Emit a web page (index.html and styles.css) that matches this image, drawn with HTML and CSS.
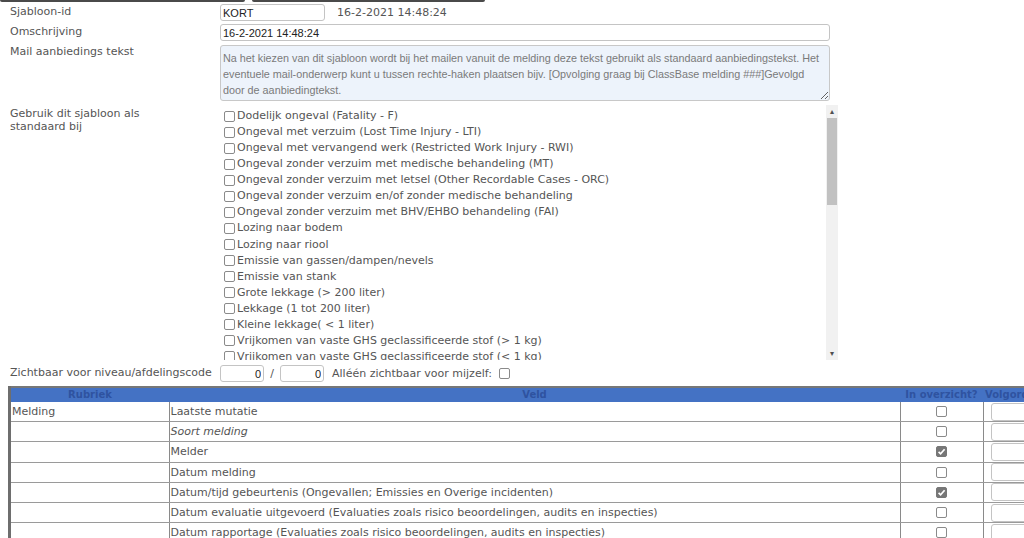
FILE: index.html
```html
<!DOCTYPE html>
<html lang="nl">
<head>
    <meta charset="UTF-8">
    <title>Sjabloon</title>
    <link rel="stylesheet" href="styles.css">
</head>
<body>

<div class="topbar"><span class="tab tab1"></span><span class="tab tab2"></span></div>

<div class="form">
    <div class="row">
        <div class="lbl">Sjabloon-id</div>
        <div class="field">
            <input class="inp short" value="KORT">
            <span class="stamp">16-2-2021 14:48:24</span>
        </div>
    </div>
    <div class="row">
        <div class="lbl">Omschrijving</div>
        <div class="field"><input class="inp wide" value="16-2-2021 14:48:24"></div>
    </div>
    <div class="row">
        <div class="lbl">Mail aanbiedings tekst</div>
        <div class="areafield"><textarea class="mailtext" wrap="off">Na het kiezen van dit sjabloon wordt bij het mailen vanuit de melding deze tekst gebruikt als standaard aanbiedingstekst. Het
eventuele mail-onderwerp kunt u tussen rechte-haken plaatsen bijv. [Opvolging graag bij ClassBase melding ###]Gevolgd
door de aanbiedingtekst.</textarea></div>
    </div>
    <div class="row listrow">
        <div class="lbl">Gebruik dit sjabloon als<br>standaard bij</div>
        <div class="listbox">
            <div class="opts">
                <label class="opt"><span class="cb"></span>Dodelijk ongeval (Fatality - F)</label>
                <label class="opt"><span class="cb"></span>Ongeval met verzuim (Lost Time Injury - LTI)</label>
                <label class="opt"><span class="cb"></span>Ongeval met vervangend werk (Restricted Work Injury - RWI)</label>
                <label class="opt"><span class="cb"></span>Ongeval zonder verzuim met medische behandeling (MT)</label>
                <label class="opt"><span class="cb"></span>Ongeval zonder verzuim met letsel (Other Recordable Cases - ORC)</label>
                <label class="opt"><span class="cb"></span>Ongeval zonder verzuim en/of zonder medische behandeling</label>
                <label class="opt"><span class="cb"></span>Ongeval zonder verzuim met BHV/EHBO behandeling (FAI)</label>
                <label class="opt"><span class="cb"></span>Lozing naar bodem</label>
                <label class="opt"><span class="cb"></span>Lozing naar riool</label>
                <label class="opt"><span class="cb"></span>Emissie van gassen/dampen/nevels</label>
                <label class="opt"><span class="cb"></span>Emissie van stank</label>
                <label class="opt"><span class="cb"></span>Grote lekkage (&gt; 200 liter)</label>
                <label class="opt"><span class="cb"></span>Lekkage (1 tot 200 liter)</label>
                <label class="opt"><span class="cb"></span>Kleine lekkage( &lt; 1 liter)</label>
                <label class="opt"><span class="cb"></span>Vrijkomen van vaste GHS geclassificeerde stof (&gt; 1 kg)</label>
                <label class="opt"><span class="cb"></span>Vrijkomen van vaste GHS geclassificeerde stof (&lt; 1 kg)</label>
                <label class="opt"><span class="cb"></span>Vrijkomen van vloeibare GHS geclassificeerde stof</label>
                <label class="opt"><span class="cb"></span>Brand</label>
            </div>
            <div class="vscroll">
                <span class="arrow">&#9652;</span>
                <span class="thumb"></span>
                <span class="track"></span>
                <span class="arrow">&#9662;</span>
            </div>
        </div>
    </div>
    <div class="row visrow">
        <div class="lbl">Zichtbaar voor niveau/afdelingscode</div>
        <div class="field">
            <input class="inp num" value="0">
            <span class="slash">/</span>
            <input class="inp num" value="0">
            <span class="own">Alléén zichtbaar voor mijzelf:</span>
            <span class="cb"></span>
        </div>
    </div>
</div>

<table class="fields">
    <tr class="head">
        <th class="c1">Rubriek</th>
        <th class="c2">Veld</th>
        <th class="c3">In overzicht?</th>
        <th class="c4">Volgorde</th>
    </tr>
    <tr><td>Melding</td><td>Laatste mutatie</td><td class="mid"><span class="cb"></span></td><td><input class="inp ord"></td></tr>
    <tr><td></td><td class="ital">Soort melding</td><td class="mid"><span class="cb"></span></td><td><input class="inp ord"></td></tr>
    <tr><td></td><td>Melder</td><td class="mid"><span class="cb on"><svg viewBox="0 0 11 11" width="11" height="11"><path d="M2.6 5.8 L4.6 7.8 L8.6 3.2" fill="none" stroke="#fff" stroke-width="1.7"/></svg></span></td><td><input class="inp ord"></td></tr>
    <tr><td></td><td>Datum melding</td><td class="mid"><span class="cb"></span></td><td><input class="inp ord"></td></tr>
    <tr><td></td><td>Datum/tijd gebeurtenis (Ongevallen; Emissies en Overige incidenten)</td><td class="mid"><span class="cb on"><svg viewBox="0 0 11 11" width="11" height="11"><path d="M2.6 5.8 L4.6 7.8 L8.6 3.2" fill="none" stroke="#fff" stroke-width="1.7"/></svg></span></td><td><input class="inp ord"></td></tr>
    <tr><td></td><td>Datum evaluatie uitgevoerd (Evaluaties zoals risico beoordelingen, audits en inspecties)</td><td class="mid"><span class="cb"></span></td><td><input class="inp ord"></td></tr>
    <tr><td></td><td>Datum rapportage (Evaluaties zoals risico beoordelingen, audits en inspecties)</td><td class="mid"><span class="cb"></span></td><td><input class="inp ord"></td></tr>
</table>

</body>
</html>
```

FILE: styles.css
```css
html {
    overflow: hidden;
}

body {
    margin: 0;
    font-family: "DejaVu Sans", Verdana, sans-serif;
    font-size: 11px;
    color: #555;
    background: white;
}

.topbar {
    display: flex;
    gap: 7px;
    height: 2px;
}

.tab {
    background: #4a4a4a;
    border-radius: 0 0 2px 2px;
}

.tab1 { width: 245px; }
.tab2 { width: 233px; }

.form {
    padding: 2px 0 0 10px;
}

.row {
    display: grid;
    grid-template-columns: 210px 1fr;
    margin-bottom: 3px;
    line-height: 16px;
}

.field {
    display: flex;
    align-items: center;
    height: 17px;
}

.inp {
    box-sizing: border-box;
    height: 17px;
    border: 1px solid #c4c4c4;
    border-radius: 3px;
    font-family: "Liberation Sans", Arial, sans-serif;
    font-size: 11px;
    color: #222;
    padding: 0 2px;
    background: white;
}

.short { width: 105px; }
.wide { width: 610px; }

.stamp {
    margin-left: 12px;
    font-size: 11px;
}

.areafield {
    padding-top: 1px;
}

.mailtext {
    box-sizing: border-box;
    width: 610px;
    height: 56px;
    margin: 0;
    padding: 4px 2px;
    border: 1px solid #c8c8c8;
    border-radius: 3px;
    background: #edf3fb;
    color: #7a7a7a;
    font-family: "Liberation Sans", Arial, sans-serif;
    font-size: 10.8px;
    line-height: 16px;
    display: block;
    overflow: hidden;
}

.listrow {
    margin-top: 4px;
    margin-bottom: 3px;
}

.listrow .lbl {
    padding-top: 2px;
    line-height: 13px;
}

.listbox {
    display: flex;
    width: 618px;
    height: 255px;
}

.opts {
    flex: 1;
    overflow: hidden;
    padding-top: 3px;
}

.opt {
    display: flex;
    align-items: center;
    height: 16.07px;
    white-space: nowrap;
}

.cb {
    display: inline-block;
    box-sizing: border-box;
    width: 11px;
    height: 11px;
    border: 1px solid #8a8a8a;
    border-radius: 2px;
    background: white;
    flex: none;
}

.cb svg {
    display: block;
    margin: -1px;
}

.cb.on {
    background: #777;
    border-color: #777;
}

.opt .cb {
    margin: 0 2px 0 4px;
}

.vscroll {
    width: 12px;
    display: flex;
    flex-direction: column;
    background: #f1f1f1;
}

.arrow {
    height: 13px;
    font-size: 8px;
    line-height: 13px;
    text-align: center;
    color: #505050;
}

.thumb {
    height: 87px;
    margin: 0 1px;
    background: #c1c1c1;
}

.track {
    flex: 1;
}

.visrow {
    margin-top: 5px;
}

.num {
    width: 44px;
    text-align: right;
}

.slash {
    width: 16px;
    text-align: center;
}

.own {
    margin: 0 7px 0 8px;
}

.fields {
    margin: 4px 0 0 8px;
    border-collapse: collapse;
    border-top: 2px solid #777;
    border-left: 3px solid #6e6e6e;
    width: 1080px;
    table-layout: fixed;
}

.fields th {
    background: #4472c4;
    color: #2f53a0;
    font-size: 10px;
    font-weight: bold;
    height: 14px;
    padding: 0;
    line-height: 14px;
    white-space: nowrap;
    overflow: hidden;
}

.fields th.c4 {
    text-align: left;
    padding-left: 2px;
}

.c1 { width: 158px; }
.c2 { width: 731px; }
.c3 { width: 83px; }

.fields td {
    height: 19.2px;
    padding: 0 1px;
    border-bottom: 1px solid #9a9a9a;
    border-right: 1px solid #8a8a8a;
    white-space: nowrap;
    overflow: hidden;
}

.fields .ital {
    font-style: italic;
}

.fields .mid {
    text-align: center;
    line-height: 0;
}

.ord {
    width: 70px;
    height: 18px;
    margin-left: 6px;
    vertical-align: middle;
}
```
